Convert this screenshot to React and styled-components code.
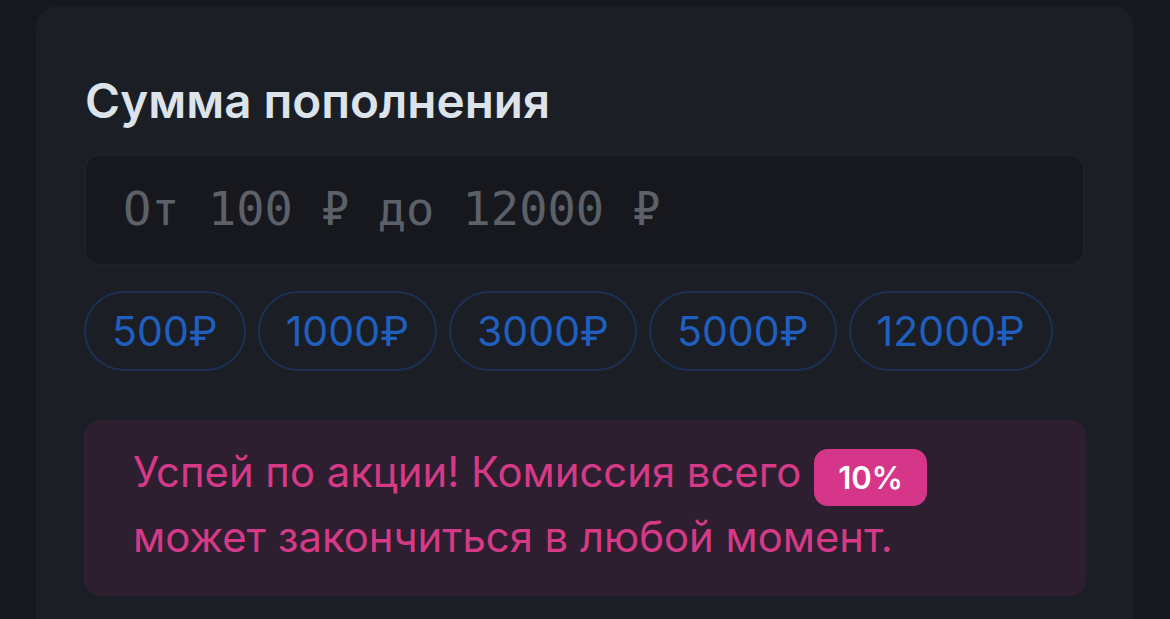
import React from "react";
import styled, { createGlobalStyle } from "styled-components";

const Global = createGlobalStyle`
  html, body { margin: 0; padding: 0; background: #16181e; }
  body { font-family: Inter, "Noto Sans", sans-serif; }
  * { box-sizing: border-box; }
`;

const Page = styled.div`
  padding: 6px 36px 0 36px;
  min-height: 619px;
`;

const Card = styled.section`
  background: #1c1e25;
  border-radius: 22px 22px 0 0;
  padding: 68px 48px 30px 48px;
  min-height: 640px;
`;

const Title = styled.h2`
  margin: 0 0 26px 1px;
  font-size: 47.6px;
  font-weight: 600;
  color: #dde3ea;
  line-height: 54px;
`;

const Input = styled.input`
  display: block;
  width: 1001px;
  height: 112px;
  background: #16181e;
  border: 2px solid #1f2127;
  border-radius: 16px;
  padding: 0 37px 4px 37px;
  font-family: "DejaVu Sans Mono", monospace;
  font-size: 47px;
  color: #dde3ea;
  outline: none;
  &::placeholder { color: #5c6169; }
`;

const Chips = styled.div`
  display: flex;
  gap: 12px;
  margin-top: 25px;
`;

const Chip = styled.button`
  height: 80px;
  padding: 0 26px;
  border-radius: 40px;
  border: 2px solid #1b3054;
  background: transparent;
  color: #1f5fbf;
  font-family: Inter, sans-serif;
  font-size: 41.1px;
  font-weight: 400;
  cursor: pointer;
`;

const Promo = styled.div`
  margin-top: 49px;
  width: 1002px;
  background: #2d1f2f;
  border-radius: 16px;
  padding: 21px 40px 28px 49px;
  color: #d63a87;
  font-size: 41.8px;
  line-height: 62px;
`;

const Badge = styled.span`
  display: inline-block;
  background: #d6368a;
  color: #fff;
  font-weight: 600;
  border-radius: 14px;
  padding: 0 24px;
  line-height: 57px;
  font-size: 31px;
  margin-left: 13px;
  vertical-align: -2px;
`;

export default function App() {
  return (
    <>
      <Global />
      <Page>
        <Card>
          <Title>Сумма пополнения</Title>
          <Input placeholder="От 100 ₽ до 12000 ₽" />
          <Chips>
            {["500₽", "1000₽", "3000₽", "5000₽", "12000₽"].map((v) => (
              <Chip key={v}>{v}</Chip>
            ))}
          </Chips>
          <Promo>
            Успей по акции! Комиссия всего<Badge>10%</Badge>
            <br />
            может закончиться в любой момент.
          </Promo>
        </Card>
      </Page>
    </>
  );
}
